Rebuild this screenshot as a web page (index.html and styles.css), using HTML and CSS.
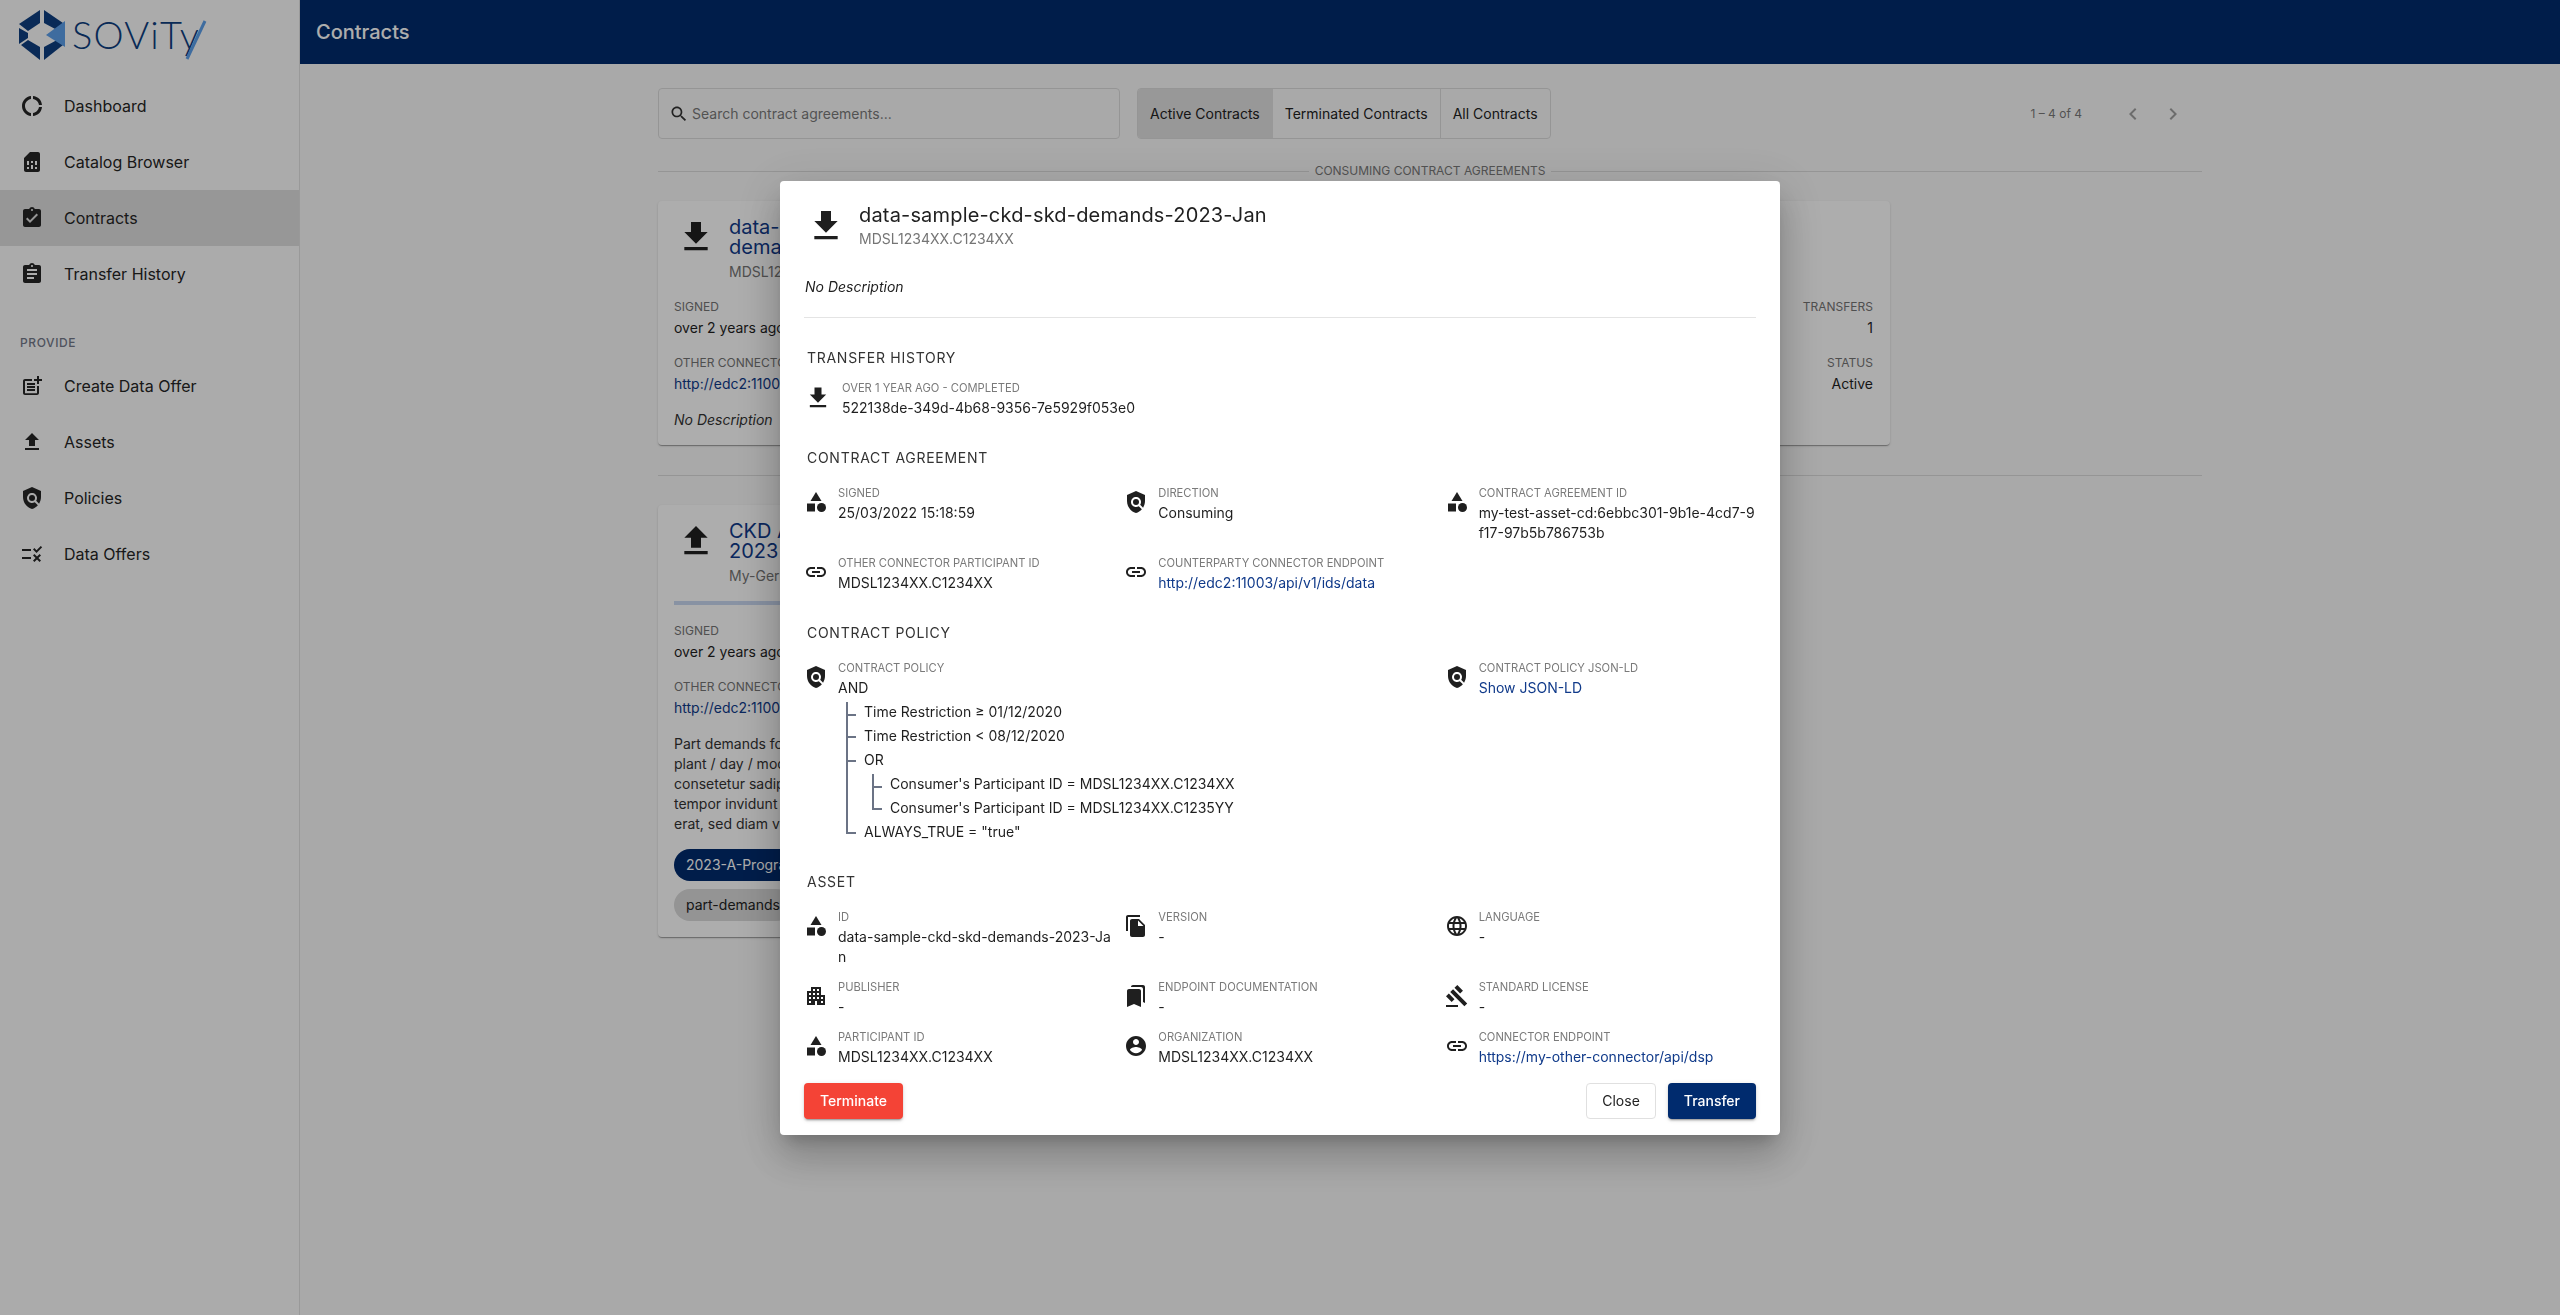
FILE: index.html
```html
<!DOCTYPE html>
<html lang="en">
<head>
<meta charset="utf-8">
<title>Contracts</title>
<link rel="stylesheet" href="styles.css">
</head>
<body>
<svg class="defs" aria-hidden="true">
  <symbol id="i-download" viewBox="0 0 24 24"><path d="M19 9h-4V3H9v6H5l7 7 7-7zM5 18v2h14v-2H5z"/></symbol>
  <symbol id="i-upload" viewBox="0 0 24 24"><path d="M9 16h6v-6h4l-7-7-7 7h4zm-4 2h14v2H5z"/></symbol>
  <symbol id="i-donut" viewBox="0 0 24 24"><path d="M11 5.08V2c-5 .5-9 4.81-9 10s4 9.5 9 10v-3.08c-3-.48-6-3.19-6-6.92s3-6.44 6-6.92zM18.97 11H22c-.47-5-4-8.53-9-9v3.08C16 5.51 18.54 8 18.97 11zM13 18.92V22c5-.47 8.53-4 9-9h-3.03c-.43 3-2.97 5.49-5.97 5.92z"/></symbol>
  <symbol id="i-sim" viewBox="0 0 24 24"><path d="M19.99 4c0-1.1-.89-2-1.99-2h-8L4 8v12c0 1.1.9 2 2 2h12c1.1 0 2-.9 2-2l-.01-16zM9 19H7v-2h2v2zm8 0h-2v-2h2v2zm-8-4H7v-4h2v4zm4 4h-2v-4h2v4zm0-6h-2v-2h2v2zm4 2h-2v-4h2v4z"/></symbol>
  <symbol id="i-turned" viewBox="0 0 24 24"><path d="M19 3h-4.18C14.4 1.84 13.3 1 12 1c-1.3 0-2.4.84-2.82 2H5c-1.1 0-2 .9-2 2v14c0 1.1.9 2 2 2h14c1.1 0 2-.9 2-2V5c0-1.1-.9-2-2-2zm-7 0c.55 0 1 .45 1 1s-.45 1-1 1-1-.45-1-1 .45-1 1-1zm-2 14l-4-4 1.41-1.41L10 14.17l6.59-6.59L18 9l-8 8z"/></symbol>
  <symbol id="i-assignment" viewBox="0 0 24 24"><path d="M19 3h-4.18C14.4 1.84 13.3 1 12 1c-1.3 0-2.4.84-2.82 2H5c-1.1 0-2 .9-2 2v14c0 1.1.9 2 2 2h14c1.1 0 2-.9 2-2V5c0-1.1-.9-2-2-2zm-7 0c.55 0 1 .45 1 1s-.45 1-1 1-1-.45-1-1 .45-1 1-1zm2 14H7v-2h7v2zm3-4H7v-2h10v2zm0-4H7V7h10v2z"/></symbol>
  <symbol id="i-postadd" viewBox="0 0 24 24"><path d="M17 19.22H5V7h7V5H5c-1.1 0-2 .9-2 2v12c0 1.1.9 2 2 2h12c1.1 0 2-.9 2-2v-7h-2v7.22z"/><path d="M19 2h-2v3h-3c.01.01 0 2 0 2h3v2.99c.01.01 2 0 2 0V7h3V5h-3V2z"/><path d="M7 9h8v2H7zM7 12v2h8v-2h-3zM7 15h8v2H7z"/></symbol>
  <symbol id="i-policy" viewBox="0 0 24 24"><path d="M21 5l-9-4-9 4v6c0 5.55 3.84 10.74 9 12 2.3-.56 4.33-1.9 5.88-3.71l-3.12-3.12c-1.94 1.29-4.58 1.07-6.29-.64-1.95-1.95-1.95-5.12 0-7.07 1.95-1.95 5.12-1.95 7.07 0 1.71 1.71 1.92 4.35.64 6.29l2.9 2.9C20.29 15.69 21 13.38 21 11V5z"/><circle cx="12" cy="12" r="3"/></symbol>
  <symbol id="i-rule" viewBox="0 0 24 24"><path d="M16.54 11L13 7.46l1.41-1.41 2.12 2.12 4.24-4.24 1.41 1.41L16.54 11zM11 7H2v2h9V7zm10 6.41L19.59 12 17 14.59 14.41 12 13 13.41 15.59 16 13 18.59 14.41 20 17 17.41 19.59 20 21 18.59 18.41 16 21 13.41zM11 15H2v2h9v-2z"/></symbol>
  <symbol id="i-category" viewBox="0 0 24 24"><path d="M12 2l-5.5 9h11z"/><circle cx="17.5" cy="17.5" r="4.5"/><path d="M3 13.5h8v8H3z"/></symbol>
  <symbol id="i-link" viewBox="0 0 24 24"><path d="M3.9 12c0-1.71 1.39-3.1 3.1-3.1h4V7H7c-2.76 0-5 2.24-5 5s2.24 5 5 5h4v-1.9H7c-1.71 0-3.1-1.39-3.1-3.1zM8 13h8v-2H8v2zm9-6h-4v1.9h4c1.71 0 3.1 1.39 3.1 3.1s-1.39 3.1-3.1 3.1h-4V17h4c2.76 0 5-2.24 5-5s-2.24-5-5-5z"/></symbol>
  <symbol id="i-copy" viewBox="0 0 24 24"><path d="M16 1H4c-1.1 0-2 .9-2 2v14h2V3h12V1zm-1 4l6 6v10c0 1.1-.9 2-2 2H7.99C6.89 23 6 22.1 6 21l.01-14c0-1.1.89-2 1.99-2h7zm-1 7h5.5L14 6.5V12z"/></symbol>
  <symbol id="i-language" viewBox="0 0 24 24"><path d="M11.99 2C6.47 2 2 6.48 2 12s4.47 10 9.99 10C17.52 22 22 17.52 22 12S17.52 2 11.99 2zm6.93 6h-2.95c-.32-1.25-.78-2.45-1.38-3.56 1.84.63 3.37 1.91 4.33 3.56zM12 4.04c.83 1.2 1.48 2.53 1.91 3.96h-3.82c.43-1.43 1.08-2.76 1.91-3.96zM4.26 14C4.1 13.36 4 12.69 4 12s.1-1.36.26-2h3.38c-.08.66-.14 1.32-.14 2 0 .68.06 1.34.14 2H4.26zm.82 2h2.95c.32 1.25.78 2.45 1.38 3.56-1.84-.63-3.37-1.9-4.33-3.56zm2.95-8H5.08c.96-1.66 2.49-2.93 4.33-3.56C8.81 5.55 8.35 6.75 8.03 8zM12 19.96c-.83-1.2-1.48-2.53-1.91-3.96h3.82c-.43 1.43-1.08 2.76-1.91 3.96zM14.34 14H9.66c-.09-.66-.16-1.32-.16-2 0-.68.07-1.35.16-2h4.68c.09.65.16 1.32.16 2 0 .68-.07 1.34-.16 2zm.25 5.56c.6-1.11 1.06-2.31 1.38-3.56h2.95c-.96 1.65-2.49 2.93-4.33 3.56zM16.36 14c.08-.66.14-1.32.14-2 0-.68-.06-1.34-.14-2h3.38c.16.64.26 1.31.26 2s-.1 1.36-.26 2h-3.38z"/></symbol>
  <symbol id="i-apartment" viewBox="0 0 24 24"><path d="M17 11V3H7v4H3v14h8v-4h2v4h8V11h-4zM7 19H5v-2h2v2zm0-4H5v-2h2v2zm0-4H5V9h2v2zm4 4H9v-2h2v2zm0-4H9V9h2v2zm0-4H9V5h2v2zm4 8h-2v-2h2v2zm0-4h-2V9h2v2zm0-4h-2V5h2v2zm4 12h-2v-2h2v2zm0-4h-2v-2h2v2z"/></symbol>
  <symbol id="i-bookmarks" viewBox="0 0 24 24"><path d="M19 18l2 1V3c0-1.1-.9-2-2-2H8.99C7.89 1 7 1.9 7 3h10c1.1 0 2 .9 2 2v13zM15 5H5c-1.1 0-2 .9-2 2v16l7-3 7 3V7c0-1.1-.9-2-2-2z"/></symbol>
  <symbol id="i-gavel" viewBox="0 0 24 24"><path d="M1 21h12v2H1zM5.245 8.07l2.83-2.827 14.14 14.142-2.828 2.828zM12.317 1l5.657 5.656-2.83 2.83-5.654-5.66zM3.825 9.485l5.657 5.657-2.828 2.828-5.657-5.657z"/></symbol>
  <symbol id="i-account" viewBox="0 0 24 24"><path d="M12 2C6.48 2 2 6.48 2 12s4.48 10 10 10 10-4.48 10-10S17.52 2 12 2zm0 3c1.66 0 3 1.34 3 3s-1.34 3-3 3-3-1.34-3-3 1.34-3 3-3zm0 14.2c-2.5 0-4.71-1.28-6-3.22.03-1.99 4-3.08 6-3.08 1.99 0 5.97 1.09 6 3.08-1.29 1.94-3.5 3.22-6 3.22z"/></symbol>
  <symbol id="i-search" viewBox="0 0 24 24"><path d="M15.5 14h-.79l-.28-.27C15.41 12.59 16 11.11 16 9.5 16 5.91 13.09 3 9.5 3S3 5.91 3 9.5 5.91 16 9.5 16c1.61 0 3.09-.59 4.23-1.57l.27.28v.79l5 4.99L20.49 19l-4.99-5zm-6 0C7.01 14 5 11.99 5 9.5S7.01 5 9.5 5 14 7.01 14 9.5 11.99 14 9.5 14z"/></symbol>
  <symbol id="i-left" viewBox="0 0 24 24"><path d="M15.41 7.41L14 6l-6 6 6 6 1.41-1.41L10.83 12z"/></symbol>
  <symbol id="i-right" viewBox="0 0 24 24"><path d="M10 6L8.59 7.41 13.17 12l-4.58 4.59L10 18l6-6z"/></symbol>
</svg>

<div class="app">
  <aside class="sidebar">
    <svg class="logo" viewBox="0 0 299 78" width="299" height="78">
      <g class="logo-dark">
        <polygon points="19,24 40,10 40,23 28,31"/>
        <polygon points="44,10 63,23 57,30 44,23"/>
        <polygon points="19,28 28,33 28,38 19,44"/>
        <polygon points="21,45 28,40 40,47 40,60"/>
        <polygon points="44,47 57,40 63,45 44,60"/>
      </g>
      <polygon class="logo-light" points="46,35 65,21 65,47"/>
      <text class="logo-text" x="72" y="49">SOViTy</text>
      <line class="logo-slash" x1="187" y1="59" x2="205" y2="21"/>
    </svg>
    <nav class="nav">
      <a class="nav-item"><svg class="icon"><use href="#i-donut"/></svg>Dashboard</a>
      <a class="nav-item"><svg class="icon"><use href="#i-sim"/></svg>Catalog Browser</a>
      <a class="nav-item active"><svg class="icon"><use href="#i-turned"/></svg>Contracts</a>
      <a class="nav-item"><svg class="icon"><use href="#i-assignment"/></svg>Transfer History</a>
      <div class="nav-label">PROVIDE</div>
      <a class="nav-item"><svg class="icon"><use href="#i-postadd"/></svg>Create Data Offer</a>
      <a class="nav-item"><svg class="icon"><use href="#i-upload"/></svg>Assets</a>
      <a class="nav-item"><svg class="icon"><use href="#i-policy"/></svg>Policies</a>
      <a class="nav-item"><svg class="icon"><use href="#i-rule"/></svg>Data Offers</a>
    </nav>
  </aside>

  <div class="main">
    <header class="topbar">Contracts</header>
    <div class="content">
      <div class="toolbar">
        <div class="search"><svg class="icon search-icon"><use href="#i-search"/></svg><span>Search contract agreements...</span></div>
        <div class="toggle">
          <span class="toggle-btn selected">Active Contracts</span>
          <span class="toggle-btn">Terminated Contracts</span>
          <span class="toggle-btn bordered">All Contracts</span>
        </div>
        <div class="pager">
          <span class="pager-text">1 – 4 of 4</span>
          <svg class="icon pager-icon"><use href="#i-left"/></svg>
          <svg class="icon pager-icon"><use href="#i-right"/></svg>
        </div>
      </div>

      <div class="divider"><span>Consuming Contract Agreements</span></div>

      <article class="card card-wide">
        <div class="card-head">
          <svg class="icon icon-40"><use href="#i-download"/></svg>
          <div>
            <div class="card-title">data-sample-ckd-skd-<br>demands-2023-Jan</div>
            <div class="card-sub">MDSL1234XX.C1234XX</div>
          </div>
        </div>
        <div class="card-fields">
          <div>
            <div class="field"><div class="f-label">Signed</div><div class="f-value">over 2 years ago</div></div>
            <div class="field"><div class="f-label">Other Connector</div><a class="f-value link">http://edc2:11003/api/v1/ids/data</a></div>
          </div>
          <div class="right">
            <div class="field"><div class="f-label">Transfers</div><div class="f-value">1</div></div>
            <div class="field"><div class="f-label">Status</div><div class="f-value">Active</div></div>
          </div>
        </div>
        <div class="card-desc italic">No Description</div>
      </article>

      <div class="divider"><span>Providing Contract Agreements</span></div>

      <article class="card card-narrow">
        <div class="card-head">
          <svg class="icon icon-40"><use href="#i-upload"/></svg>
          <div>
            <div class="card-title">CKD Assets Program<br>2023</div>
            <div class="card-sub">My-German-Connector</div>
          </div>
        </div>
        <div class="card-bar"></div>
        <div class="field"><div class="f-label">Signed</div><div class="f-value">over 2 years ago</div></div>
        <div class="field"><div class="f-label">Other Connector</div><a class="f-value link">http://edc2:11003/api/v1/ids/data</a></div>
        <div class="card-desc">Part demands for CKD assets per<br>plant / day / model. Lorem ipsum dolor sit amet,<br>consetetur sadipscing elitr, sed diam nonumy eirmod<br>tempor invidunt ut labore et dolore magna aliquyam<br>erat, sed diam voluptua.</div>
        <div class="chip chip-primary">2023-A-Program</div>
        <div class="chip">part-demands</div>
      </article>
    </div>
  </div>
</div>

<div class="backdrop">
  <section class="dialog">
    <div class="dialog-body">
      <div class="dialog-head">
        <svg class="icon icon-40"><use href="#i-download"/></svg>
        <div>
          <div class="dialog-title">data-sample-ckd-skd-demands-2023-Jan</div>
          <div class="dialog-sub">MDSL1234XX.C1234XX</div>
        </div>
      </div>
      <div class="dialog-desc italic">No Description</div>
      <hr class="rule">

      <h2 class="section section-first">Transfer History</h2>
      <div class="transfer">
        <svg class="icon icon-28"><use href="#i-download"/></svg>
        <div>
          <div class="p-label">Over 1 year ago - Completed</div>
          <div class="p-value">522138de-349d-4b68-9356-7e5929f053e0</div>
        </div>
      </div>

      <h2 class="section">Contract Agreement</h2>
      <div class="grid">
        <div class="prop"><svg class="icon"><use href="#i-category"/></svg><div class="prop-text"><div class="p-label">Signed</div><div class="p-value">25/03/2022 15:18:59</div></div></div>
        <div class="prop"><svg class="icon"><use href="#i-policy"/></svg><div class="prop-text"><div class="p-label">Direction</div><div class="p-value">Consuming</div></div></div>
        <div class="prop"><svg class="icon"><use href="#i-category"/></svg><div class="prop-text"><div class="p-label">Contract Agreement ID</div><div class="p-value">my-test-asset-cd:6ebbc301-9b1e-4cd7-9f17-97b5b786753b</div></div></div>
        <div class="prop"><svg class="icon"><use href="#i-link"/></svg><div class="prop-text"><div class="p-label">Other Connector Participant ID</div><div class="p-value">MDSL1234XX.C1234XX</div></div></div>
        <div class="prop"><svg class="icon"><use href="#i-link"/></svg><div class="prop-text"><div class="p-label">Counterparty Connector Endpoint</div><a class="p-value link">http://edc2:11003/api/v1/ids/data</a></div></div>
      </div>

      <h2 class="section">Contract Policy</h2>
      <div class="grid">
        <div class="prop span-2"><svg class="icon"><use href="#i-policy"/></svg>
          <div class="prop-text">
            <div class="p-label">Contract Policy</div>
            <div class="p-value">AND</div>
            <ul class="tree">
              <li>Time Restriction ≥ 01/12/2020</li>
              <li>Time Restriction &lt; 08/12/2020</li>
              <li>OR
                <ul class="tree nested">
                  <li>Consumer's Participant ID = MDSL1234XX.C1234XX</li>
                  <li>Consumer's Participant ID = MDSL1234XX.C1235YY</li>
                </ul>
              </li>
              <li>ALWAYS_TRUE = "true"</li>
            </ul>
          </div>
        </div>
        <div class="prop"><svg class="icon"><use href="#i-policy"/></svg><div class="prop-text"><div class="p-label">Contract Policy JSON-LD</div><a class="p-value link">Show JSON-LD</a></div></div>
      </div>

      <h2 class="section section-asset">Asset</h2>
      <div class="grid">
        <div class="prop"><svg class="icon"><use href="#i-category"/></svg><div class="prop-text"><div class="p-label">ID</div><div class="p-value">data-sample-ckd-skd-demands-2023-Jan</div></div></div>
        <div class="prop"><svg class="icon"><use href="#i-copy"/></svg><div class="prop-text"><div class="p-label">Version</div><div class="p-value">-</div></div></div>
        <div class="prop"><svg class="icon"><use href="#i-language"/></svg><div class="prop-text"><div class="p-label">Language</div><div class="p-value">-</div></div></div>
        <div class="prop"><svg class="icon"><use href="#i-apartment"/></svg><div class="prop-text"><div class="p-label">Publisher</div><div class="p-value">-</div></div></div>
        <div class="prop"><svg class="icon"><use href="#i-bookmarks"/></svg><div class="prop-text"><div class="p-label">Endpoint Documentation</div><div class="p-value">-</div></div></div>
        <div class="prop"><svg class="icon"><use href="#i-gavel"/></svg><div class="prop-text"><div class="p-label">Standard License</div><div class="p-value">-</div></div></div>
        <div class="prop"><svg class="icon"><use href="#i-category"/></svg><div class="prop-text"><div class="p-label">Participant ID</div><div class="p-value">MDSL1234XX.C1234XX</div></div></div>
        <div class="prop"><svg class="icon"><use href="#i-account"/></svg><div class="prop-text"><div class="p-label">Organization</div><div class="p-value">MDSL1234XX.C1234XX</div></div></div>
        <div class="prop"><svg class="icon"><use href="#i-link"/></svg><div class="prop-text"><div class="p-label">Connector Endpoint</div><a class="p-value link">https://my-other-connector/api/dsp</a></div></div>
      </div>
    </div>
    <footer class="dialog-actions">
      <button class="btn btn-danger">Terminate</button>
      <div class="actions-right">
        <button class="btn btn-plain">Close</button>
        <button class="btn btn-primary">Transfer</button>
      </div>
    </footer>
  </section>
</div>
</body>
</html>
```

FILE: styles.css
```css
* { box-sizing: border-box; }
html, body { margin: 0; height: 100%; }
body {
  font-family: Inter, "Liberation Sans", sans-serif;
  font-size: 14px;
  line-height: 20px;
  color: #1f1f1f;
  background: #fafafa;
  overflow: hidden;
}
.defs { display: none; }
.icon { width: 24px; height: 24px; fill: currentColor; flex: none; display: block; }
.icon-40 { width: 40px; height: 40px; }
.icon-28 { width: 28px; height: 28px; }
.italic { font-style: italic; }
.link { color: #103a8a; text-decoration: none; display: block; }

.app { display: flex; height: 100vh; }

/* Sidebar */
.sidebar { width: 300px; flex: none; background: #fdfdfd; border-right: 1px solid #e2e2e2; }
.logo { display: block; }
.logo-dark { fill: #0e3f80; }
.logo-light { fill: #5c9fea; }
.logo-text { font-family: Lato, "Open Sans", sans-serif; font-size: 38px; font-weight: 300; fill: #0e3f80; letter-spacing: 1.2px; }
.logo-slash { stroke: #5c9fea; stroke-width: 3; }
.nav-item {
  display: flex; align-items: center; gap: 20px;
  height: 56px; padding-left: 20px;
  font-size: 16px; color: #262626;
}
.nav-item.active { background: #dfdfdf; }
.nav-label {
  margin: 31px 0 5px; padding-left: 20px;
  font-size: 12px; font-weight: 500; letter-spacing: .6px; color: #74798a;
}

/* Main */
.main { flex: 1; min-width: 0; display: flex; flex-direction: column; }
.topbar {
  height: 64px; flex: none; display: flex; align-items: center;
  padding: 0 16px 1px; background: #002b6e; color: #fff;
  font-size: 20px; font-weight: 500;
}
.content { width: 1544px; margin: 0 auto; padding-top: 24px; }
.toolbar { display: flex; align-items: stretch; height: 51px; }
.search {
  width: 462px; display: flex; align-items: center; gap: 3px;
  padding-left: 10px; border: 1px solid #dcdcdc; border-radius: 4px;
  color: #7a7a7a;
}
.search-icon { width: 20px; height: 20px; color: #333; }
.toggle {
  display: flex; margin-left: 17px; border: 1px solid #dcdcdc; border-radius: 4px; overflow: hidden;
}
.toggle-btn { display: flex; align-items: center; padding: 0 12px; color: #222; }
.toggle-btn.selected { background: #e0e0e0; padding-right: 13px; }
.toggle-btn.bordered { border-left: 1px solid #dcdcdc; }
.pager { margin-left: auto; display: flex; align-items: center; padding-right: 9px; color: #7a7a7a; }
.pager-text { font-size: 12px; margin-right: 31px; }
.pager-icon { margin: 0 8px; width: 24px; height: 24px; color: #a0a0a0; }

.divider {
  display: flex; align-items: center; gap: 6px; height: 20px; margin: 22px 0 20px;
  font-size: 12px; text-transform: uppercase; color: #7a7a7a;
}
.divider::before, .divider::after { content: ""; flex: 1; height: 1px; background: #dcdcdc; }
.card + .divider { margin-top: 20px; }

.card {
  background: #fff; border-radius: 4px; padding: 16px 17px 16px 16px;
  box-shadow: 0 2px 1px -1px rgba(0,0,0,.2), 0 1px 1px rgba(0,0,0,.14), 0 1px 3px rgba(0,0,0,.12);
}
.card-wide { width: 1232px; height: 244px; }
.card-narrow { width: 1000px; }
.card-head { display: flex; gap: 13px; align-items: flex-start; padding-left: 2px; }
.card-title { font-size: 20px; line-height: 20px; color: #103a8a; }
.card-sub { margin-top: 5px; color: #757575; }
.card-wide .card-head { margin-bottom: 15px; }
.card-bar { height: 4px; margin: 15px 0 16px; background: #c9d7f0; }
.card-fields { display: flex; justify-content: space-between; }
.right { text-align: right; }
.field { margin-bottom: 15px; }
.f-label { font-size: 12px; text-transform: uppercase; color: #757575; margin-bottom: 1px; }
.card-desc { margin-top: 16px; color: #333; }
.card-fields + .card-desc { margin-top: 1px; }
.chip {
  display: table; height: 32px; line-height: 32px; padding: 0 12px; border-radius: 16px;
  background: #dadada; color: #222; margin-top: 8px;
}
.card-desc + .chip { margin-top: 15px; }
.chip-primary { background: #002b6e; color: #fff; }

/* Dialog */
.backdrop {
  position: fixed; inset: 0; background: rgba(0,0,0,.32);
  display: flex; align-items: center; justify-content: center;
}
.dialog {
  width: 1000px; height: 954px; background: #fff; border-radius: 4px;
  display: flex; flex-direction: column;
  box-shadow: 0 11px 15px -7px rgba(0,0,0,.2), 0 24px 38px 3px rgba(0,0,0,.14), 0 9px 46px 8px rgba(0,0,0,.12);
}
.dialog-body { flex: 1; min-height: 0; overflow: hidden; padding: 24px 24px 0; }
.dialog-head { display: flex; gap: 13px; padding-left: 2px; }
.dialog-head .icon { margin-top: 1px; }
.dialog-title { font-size: 20px; line-height: 20px; letter-spacing: .17px; color: #1f1f1f; }
.dialog-sub { margin-top: 4px; color: #757575; }
.dialog-desc { margin-top: 28px; padding-left: 1px; }
.rule { margin: 20px 0 0; border: 0; border-top: 1px solid #e4e4e4; }
.section {
  margin: 30px 0 15px; padding-left: 3px;
  font-size: 14px; line-height: 20px; font-weight: 400; letter-spacing: .72px;
  text-transform: uppercase; color: #333;
}
.section-first { margin-bottom: 10px; }
.section-asset { margin-top: 28px; }
.transfer { display: flex; gap: 10px; }
.transfer .icon { margin-top: 6px; }
.p-label { font-size: 11.2px; line-height: 20px; text-transform: uppercase; color: #7a7a7a; }
.p-value { font-size: 14px; line-height: 20px; word-break: break-all; }
.p-value.link { color: #103a8a; }
.grid { display: grid; grid-template-columns: repeat(3, 1fr); gap: 10px 9px; }
.prop { display: flex; gap: 10px; min-width: 0; }
.prop > .icon { margin-top: 7px; }
.prop-text { min-width: 0; flex: 1; }
.span-2 { grid-column: span 2; }

.tree { list-style: none; margin: 0; padding: 2px 0 0; }
.tree li { position: relative; padding-left: 26px; line-height: 24px; }
.tree li::before {
  content: ""; position: absolute; left: 8px; top: 0; width: 8px; height: 12px;
  border-left: 2px solid #6b7385; border-bottom: 2px solid #6b7385;
}
.tree li:not(:last-child)::after {
  content: ""; position: absolute; left: 8px; top: 0; bottom: 0; border-left: 2px solid #6b7385;
}
.tree li:first-child::before, .tree li:first-child::after { top: 2px; }
.nested { padding-top: 0; }

.dialog-actions {
  flex: none; display: flex; justify-content: space-between; align-items: center;
  padding: 8px 24px 16px;
}
.actions-right { display: flex; gap: 12px; }
.btn {
  height: 36px; padding: 0 16px; border: 0; border-radius: 4px;
  font: 500 14px/20px Inter, "Liberation Sans", sans-serif;
}
.btn-danger { background: #f44336; color: #fff; box-shadow: 0 3px 1px -2px rgba(0,0,0,.2), 0 2px 2px rgba(0,0,0,.14), 0 1px 5px rgba(0,0,0,.12); }
.btn-primary { background: #002b6e; color: #fff; box-shadow: 0 3px 1px -2px rgba(0,0,0,.2), 0 2px 2px rgba(0,0,0,.14), 0 1px 5px rgba(0,0,0,.12); }
.btn-plain { background: #fff; color: #222; border: 1px solid #e0e0e0; font-weight: 400; padding: 0 15px; }
```
